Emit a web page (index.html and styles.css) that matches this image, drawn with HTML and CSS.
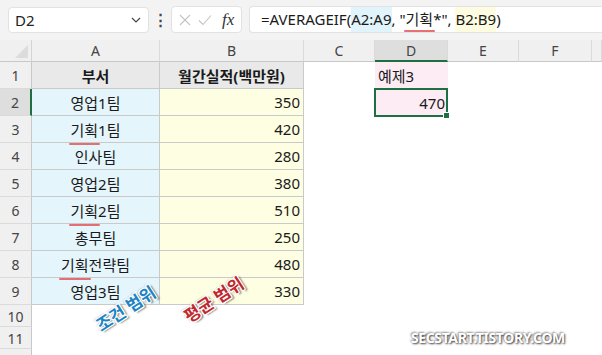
FILE: index.html
```html
<!DOCTYPE html>
<html lang="ko">
<head>
    <meta charset="UTF-8">
    <title>AVERAGEIF 예제3</title>
    <link rel="stylesheet" href="styles.css">
</head>
<body>
    <div class="toolbar">
        <div class="name-box">
            <span>D2</span>
            <svg class="chevron" width="10" height="6" viewBox="0 0 10 6"><path d="M1 1 L5 5 L9 1" fill="none" stroke="#444" stroke-width="1.1"/></svg>
        </div>
        <div class="more-dots">⋮</div>
        <div class="fx-box">
            <svg width="14" height="14" viewBox="0 0 14 14"><path d="M2 2 L12 12 M12 2 L2 12" stroke="#c4c4c4" stroke-width="1.1"/></svg>
            <svg width="16" height="14" viewBox="0 0 16 14"><path d="M2 7.5 L6 11.5 L14 2.5" fill="none" stroke="#c4c4c4" stroke-width="1.1"/></svg>
            <span class="fx">fx</span>
        </div>
        <div class="formula-box">=AVERAGEIF(<span class="ref-a">A2:A9</span>, "<span class="mark">기획</span>*", <span class="ref-b">B2:B9</span>)</div>
    </div>

    <div class="sheet">
        <div class="corner"></div>
        <div class="col-head">A</div>
        <div class="col-head">B</div>
        <div class="col-head">C</div>
        <div class="col-head active">D</div>
        <div class="col-head">E</div>
        <div class="col-head">F</div>
        <div class="col-head"></div>

        <div class="row-head">1</div>
        <div class="cell title">부서</div>
        <div class="cell title">월간실적(백만원)</div>
        <div class="cell empty"></div>
        <div class="cell pink">예제3</div>
        <div class="cell empty"></div>
        <div class="cell empty"></div>
        <div class="cell empty"></div>

        <div class="row-head active">2</div>
        <div class="cell dept">영업1팀</div>
        <div class="cell amount">350</div>
        <div class="cell empty"></div>
        <div class="cell pink result">470<span class="fill-handle"></span></div>
        <div class="cell empty"></div>
        <div class="cell empty"></div>
        <div class="cell empty"></div>

        <div class="row-head">3</div>
        <div class="cell dept"><span class="mark">기획</span>1팀</div>
        <div class="cell amount">420</div>
        <div class="cell empty"></div><div class="cell empty"></div><div class="cell empty"></div><div class="cell empty"></div><div class="cell empty"></div>

        <div class="row-head">4</div>
        <div class="cell dept">인사팀</div>
        <div class="cell amount">280</div>
        <div class="cell empty"></div><div class="cell empty"></div><div class="cell empty"></div><div class="cell empty"></div><div class="cell empty"></div>

        <div class="row-head">5</div>
        <div class="cell dept">영업2팀</div>
        <div class="cell amount">380</div>
        <div class="cell empty"></div><div class="cell empty"></div><div class="cell empty"></div><div class="cell empty"></div><div class="cell empty"></div>

        <div class="row-head">6</div>
        <div class="cell dept"><span class="mark">기획</span>2팀</div>
        <div class="cell amount">510</div>
        <div class="cell empty"></div><div class="cell empty"></div><div class="cell empty"></div><div class="cell empty"></div><div class="cell empty"></div>

        <div class="row-head">7</div>
        <div class="cell dept">총무팀</div>
        <div class="cell amount">250</div>
        <div class="cell empty"></div><div class="cell empty"></div><div class="cell empty"></div><div class="cell empty"></div><div class="cell empty"></div>

        <div class="row-head">8</div>
        <div class="cell dept"><span class="mark">기획</span>전략팀</div>
        <div class="cell amount">480</div>
        <div class="cell empty"></div><div class="cell empty"></div><div class="cell empty"></div><div class="cell empty"></div><div class="cell empty"></div>

        <div class="row-head">9</div>
        <div class="cell dept">영업3팀</div>
        <div class="cell amount">330</div>
        <div class="cell empty"></div><div class="cell empty"></div><div class="cell empty"></div><div class="cell empty"></div><div class="cell empty"></div>

        <div class="row-head">10</div>
        <div class="cell empty"></div><div class="cell empty"></div><div class="cell empty"></div><div class="cell empty"></div><div class="cell empty"></div><div class="cell empty"></div><div class="cell empty"></div>

        <div class="row-head">11</div>
        <div class="cell empty"></div><div class="cell empty"></div><div class="cell empty"></div><div class="cell empty"></div><div class="cell empty"></div><div class="cell empty"></div><div class="cell empty"></div>

        <div class="row-head"></div>
        <div class="cell empty"></div><div class="cell empty"></div><div class="cell empty"></div><div class="cell empty"></div><div class="cell empty"></div><div class="cell empty"></div><div class="cell empty"></div>

        <div class="label label-criteria">조건 범위</div>
        <div class="label label-average">평균 범위</div>
        <div class="watermark">SECSTART.TISTORY.COM</div>
    </div>
</body>
</html>
```

FILE: styles.css
```css
body {
    margin: 0;
    padding: 0;
    width: 602px;
    height: 355px;
    overflow: hidden;
    background: #ffffff;
    font-family: "Noto Sans", "Noto Sans CJK KR", sans-serif;
    color: #1a1a1a;
}
.toolbar {
    height: 40px;
    background: #f3f3f3;
    display: flex;
    align-items: flex-start;
    padding-top: 6px;
    box-sizing: border-box;
    white-space: nowrap;
}
.name-box {
    margin: 1px 0 0 8px;
    width: 141px;
    height: 26px;
    box-sizing: border-box;
    background: #fff;
    border: 1px solid #e2e2e2;
    border-radius: 4px;
    display: flex;
    align-items: center;
    justify-content: space-between;
    padding: 0 7px 0 6px;
    font-size: 15px;
    color: #222;
}
.more-dots {
    width: 22px;
    text-align: center;
    font-size: 15px;
    line-height: 27px;
    font-weight: bold;
    color: #444;
}
.fx-box {
    width: 71px;
    height: 27px;
    box-sizing: border-box;
    background: #fff;
    border: 1px solid #e2e2e2;
    border-radius: 4px;
    display: flex;
    align-items: center;
    gap: 5px;
    padding-left: 6px;
}
.fx {
    font-family: "Liberation Serif", serif;
    font-style: italic;
    font-size: 17px;
    color: #333;
    margin-left: 4px;
}
.formula-box {
    margin-left: 7px;
    flex: 1;
    height: 27px;
    box-sizing: border-box;
    background: #fff;
    border: 1px solid #e2e2e2;
    border-right: none;
    border-radius: 4px 0 0 4px;
    padding-left: 11px;
    font-size: 15px;
    line-height: 25px;
    color: #1a1a1a;
}
.ref-a, .ref-b {
    display: inline-block;
    height: 25px;
    vertical-align: top;
}
.ref-a {
    background: #e1f3fb;
}
.ref-b {
    background: #fdfbe0;
}
.mark {
    position: relative;
}
.mark::after {
    content: "";
    position: absolute;
    left: -2px;
    right: -2px;
    bottom: -5px;
    height: 2px;
    border-radius: 2px;
    background: #e2575b;
    opacity: 0.85;
}
.formula-box .mark::after {
    bottom: -3px;
}

.sheet {
    position: relative;
    display: grid;
    grid-template-columns: 32px 128px 144px 71px 73px 71px 73px 10px;
    grid-template-rows: 22px repeat(9, 27px) repeat(3, 22px);
    font-size: 15px;
}
.corner {
    background: #f0f0f0;
    border-right: 1px solid #d4d4d4;
    border-bottom: 1px solid #c8c8c8;
    position: relative;
}
.corner::after {
    content: "";
    position: absolute;
    right: 3px;
    bottom: 3px;
    border-left: 13px solid transparent;
    border-bottom: 13px solid #dcdcdc;
}
.col-head {
    background: #f0f0f0;
    border-right: 1px solid #dadada;
    border-bottom: 1px solid #c8c8c8;
    text-align: center;
    line-height: 21px;
    font-size: 14px;
    color: #444;
}
.col-head.active {
    background: #dedede;
    border-bottom: 2px solid #1e6f42;
}
.row-head {
    background: #f0f0f0;
    border-right: 1px solid #c8c8c8;
    border-bottom: 1px solid #dadada;
    text-align: center;
    font-size: 14px;
    color: #444;
    display: flex;
    align-items: center;
    justify-content: center;
    padding-top: 1px;
}
.row-head.active {
    background: #dedede;
    border-right: 2px solid #1e6f42;
}
.cell {
    box-sizing: border-box;
    display: flex;
    align-items: center;
    padding: 0 3px;
    white-space: nowrap;
}
.title {
    background: #e9e9e9;
    font-weight: bold;
    justify-content: center;
    border-right: 1px solid #cacaca;
    border-bottom: 1px solid #cacaca;
}
.dept {
    background: #e5f5fc;
    justify-content: center;
    border-right: 1px solid #cacaca;
    border-bottom: 1px solid #cacaca;
}
.amount {
    background: #fefee3;
    justify-content: flex-end;
    border-right: 1px solid #cacaca;
    border-bottom: 1px solid #cacaca;
}
.pink {
    background: #fdecf4;
}
.result {
    position: relative;
    justify-content: flex-end;
    margin: -1px 0 -1px -1px;
    border: 2px solid #1e6f42;
    padding-right: 1px;
}
.fill-handle {
    position: absolute;
    right: -4px;
    bottom: -4px;
    width: 5px;
    height: 5px;
    background: #1e6f42;
    border: 1px solid #fff;
}
.label {
    position: absolute;
    width: 84px;
    height: 22px;
    line-height: 22px;
    text-align: center;
    font-weight: bold;
    font-size: 17px;
    transform: rotate(-33deg);
    white-space: nowrap;
    text-shadow: -1px -1px 0 #fff, 1px -1px 0 #fff, -1px 1px 0 #fff, 1px 1px 0 #fff,
        0 -1px 0 #fff, 0 1px 0 #fff, -1px 0 0 #fff, 1px 0 0 #fff,
        2px 2px 2px rgba(0, 0, 0, 0.6), -1px -1px 2px rgba(0, 0, 0, 0.35);
}
.label-criteria {
    left: 84px;
    top: 258px;
    color: #1a84c6;
}
.label-average {
    left: 172px;
    top: 249px;
    color: #c1272d;
}
.watermark {
    position: absolute;
    left: 411px;
    top: 288px;
    font-weight: bold;
    font-size: 14px;
    letter-spacing: -0.4px;
    color: #fff;
    text-shadow: 1px 1px 2px rgba(0, 0, 0, 0.75), -1px -1px 2px rgba(0, 0, 0, 0.4);
}
```
